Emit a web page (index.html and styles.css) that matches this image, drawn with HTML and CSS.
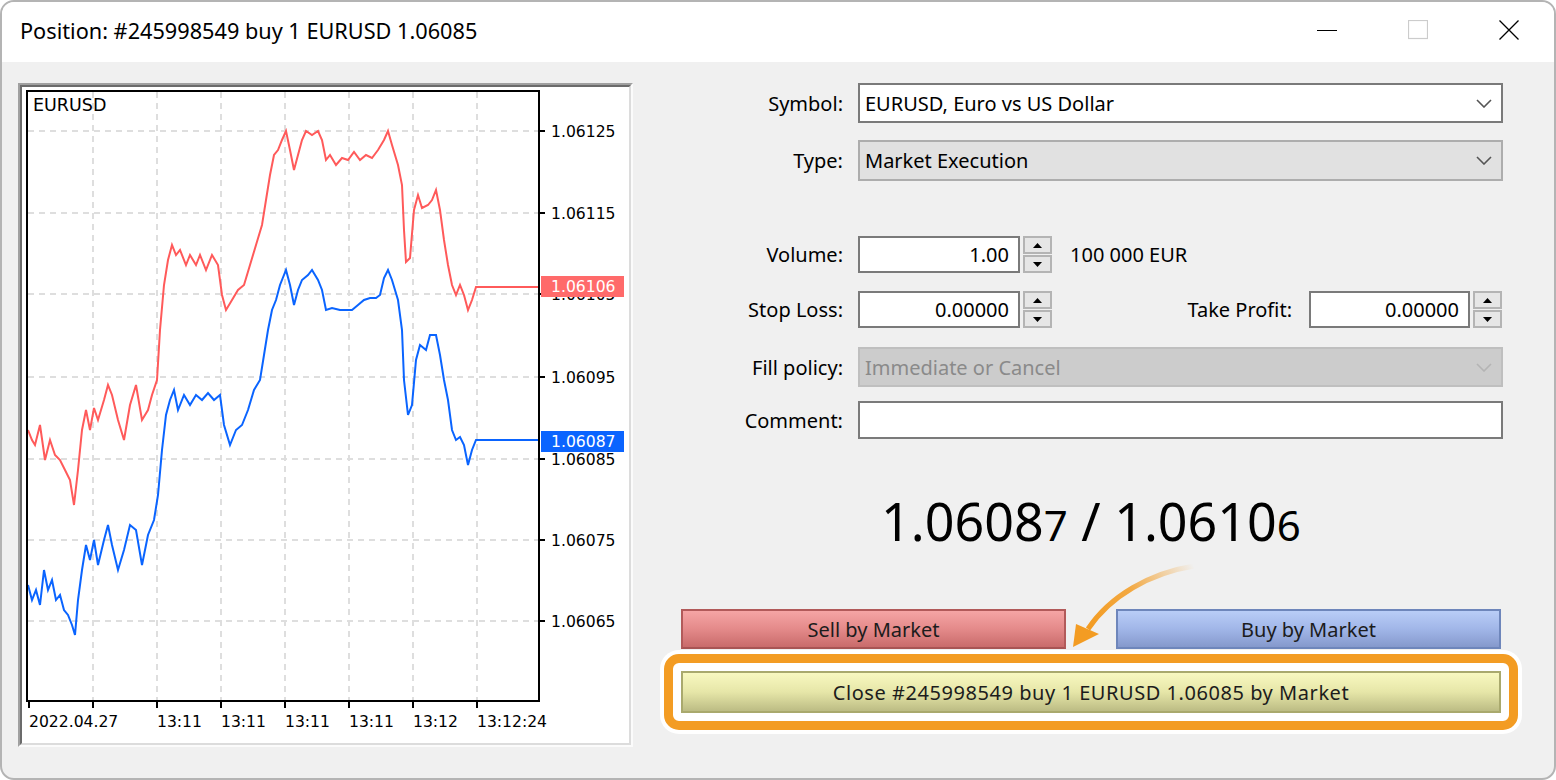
FILE: index.html
```html
<!DOCTYPE html>
<html>
<head>
<meta charset="utf-8">
<title>Position</title>
<link rel="stylesheet" href="styles.css">
</head>
<body>
<div class="window">
  <div class="titlebar">
    <div class="title">Position: #245998549 buy 1 EURUSD 1.06085</div>
    <div class="controls">
      <div class="ctl"><svg width="20" height="20" viewBox="0 0 20 20"><line x1="0" y1="10.5" x2="20" y2="10.5" stroke="#000" stroke-width="1.2"/></svg></div>
      <div class="ctl"><svg width="20" height="20" viewBox="0 0 20 20"><rect x="0.5" y="0.5" width="19" height="18" fill="none" stroke="#cccccc" stroke-width="1.2"/></svg></div>
      <div class="ctl"><svg width="20" height="20" viewBox="0 0 20 20"><path d="M0.5 0.5 L19.5 19.5 M19.5 0.5 L0.5 19.5" stroke="#000" stroke-width="1.3"/></svg></div>
    </div>
  </div>

  <div class="content">
    <div class="chart-frame">
      <div class="chart-inner">
        <svg class="chart" width="607" height="656" viewBox="0 0 607 656">
          <defs>
            <clipPath id="under-tag" clipPathUnits="userSpaceOnUse"><rect x="541" y="297" width="90" height="20"/></clipPath>
          </defs>
          <g transform="translate(-22 -87)">
            <g class="grid" stroke="#dedede" stroke-width="2" stroke-dasharray="6 5" fill="none">
              <line x1="28" y1="131" x2="538" y2="131"/>
              <line x1="28" y1="213" x2="538" y2="213"/>
              <line x1="28" y1="294" x2="538" y2="294"/>
              <line x1="28" y1="377" x2="538" y2="377"/>
              <line x1="28" y1="459" x2="538" y2="459"/>
              <line x1="28" y1="540" x2="538" y2="540"/>
              <line x1="28" y1="621" x2="538" y2="621"/>
              <line x1="93" y1="92" x2="93" y2="700"/>
              <line x1="157" y1="92" x2="157" y2="700"/>
              <line x1="221" y1="92" x2="221" y2="700"/>
              <line x1="285" y1="92" x2="285" y2="700"/>
              <line x1="349" y1="92" x2="349" y2="700"/>
              <line x1="413" y1="92" x2="413" y2="700"/>
              <line x1="477" y1="92" x2="477" y2="700"/>
            </g>
            <polyline fill="none" stroke="#ff5a5a" stroke-width="2" stroke-linejoin="miter" points="28,430 32,440 35,445 40,425 45,460 50,440 55,455 60,460 65,470 70,480 74,505 78,470 82,430 86,410 90,430 94,408 98,420 104,400 108,385 112,395 118,420 124,440 130,405 136,385 142,420 148,410 152,395 157,380 160,330 164,285 168,260 172,245 176,255 180,250 186,265 190,255 196,265 200,255 206,270 212,255 218,265 222,295 226,310 232,300 238,290 244,285 250,265 256,245 262,225 266,200 270,175 274,155 278,150 282,140 286,131 290,150 294,170 298,155 302,140 306,131 312,135 318,131 322,140 326,160 330,155 336,165 342,158 348,160 354,152 360,160 366,155 372,158 378,150 384,140 388,131 392,145 398,165 402,185 404,230 406,262 410,258 414,210 418,195 422,208 428,205 432,200 436,190 440,210 444,240 448,265 452,285 456,295 460,285 464,295 468,310 472,300 476,287 540,287"/>
            <polyline fill="none" stroke="#0a64ff" stroke-width="2" stroke-linejoin="miter" points="28,585 32,600 36,590 40,605 44,570 48,590 52,580 56,600 60,595 64,610 68,615 72,625 75,635 78,600 82,570 86,545 90,560 94,540 98,565 104,540 108,525 112,545 118,570 124,550 130,525 136,530 142,565 148,535 154,520 158,495 162,450 166,415 170,400 174,390 178,410 184,395 190,405 196,395 202,400 208,393 214,400 220,395 224,425 230,445 236,430 242,425 248,410 254,390 260,380 264,355 268,330 272,310 276,300 280,285 286,270 290,285 294,305 298,290 302,280 308,275 312,270 318,280 322,290 326,310 332,308 340,310 346,310 352,310 358,305 364,300 370,298 376,298 380,295 384,278 388,270 392,280 398,300 402,330 404,380 408,415 412,405 416,360 420,345 426,350 430,335 436,335 440,355 444,380 448,400 452,430 456,440 460,437 464,445 468,465 472,450 476,440 540,440"/>
            <rect x="27" y="91" width="512" height="610" fill="none" stroke="#000" stroke-width="2"/>
            <g stroke="#000" stroke-width="2">
              <line x1="539" y1="131" x2="545" y2="131"/>
              <line x1="539" y1="213" x2="545" y2="213"/>
              <line x1="539" y1="294" x2="545" y2="294"/>
              <line x1="539" y1="377" x2="545" y2="377"/>
              <line x1="539" y1="459" x2="545" y2="459"/>
              <line x1="539" y1="540" x2="545" y2="540"/>
              <line x1="539" y1="621" x2="545" y2="621"/>
              <line x1="29" y1="701" x2="29" y2="708"/>
              <line x1="93" y1="701" x2="93" y2="708"/>
              <line x1="157" y1="701" x2="157" y2="708"/>
              <line x1="221" y1="701" x2="221" y2="708"/>
              <line x1="285" y1="701" x2="285" y2="708"/>
              <line x1="349" y1="701" x2="349" y2="708"/>
              <line x1="413" y1="701" x2="413" y2="708"/>
              <line x1="477" y1="701" x2="477" y2="708"/>
            </g>
            <g class="axis-text">
              <text x="551" y="137">1.06125</text>
              <text x="551" y="219">1.06115</text>
              <text x="551" y="383">1.06095</text>
              <text x="551" y="465">1.06085</text>
              <text x="551" y="546">1.06075</text>
              <text x="551" y="627">1.06065</text>
              <text x="29" y="727">2022.04.27</text>
              <text x="157" y="727">13:11</text>
              <text x="221" y="727">13:11</text>
              <text x="285" y="727">13:11</text>
              <text x="349" y="727">13:11</text>
              <text x="413" y="727">13:12</text>
              <text x="477" y="727">13:12:24</text>
            </g>
            <text class="axis-part" x="551" y="300" clip-path="url(#under-tag)">1.06105</text>
            <rect x="541" y="276" width="83" height="21" fill="#ff6a6a"/>
            <text class="tag-text" x="551" y="292">1.06106</text>
            <rect x="541" y="431" width="83" height="21" fill="#0a64ff"/>
            <text class="tag-text" x="551" y="447">1.06087</text>
            <text class="sym-text" x="33" y="111">EURUSD</text>
          </g>
        </svg>
      </div>
    </div>

    <div class="form">
      <div class="row r-symbol">
        <div class="label">Symbol:</div>
        <div class="select white">
          <span>EURUSD, Euro vs US Dollar</span>
          <svg class="chev" width="16" height="9" viewBox="0 0 16 9"><path d="M1 1 L8 8 L15 1" fill="none" stroke="#555" stroke-width="1.6"/></svg>
        </div>
      </div>
      <div class="row r-type">
        <div class="label">Type:</div>
        <div class="select gray">
          <span>Market Execution</span>
          <svg class="chev" width="16" height="9" viewBox="0 0 16 9"><path d="M1 1 L8 8 L15 1" fill="none" stroke="#555" stroke-width="1.6"/></svg>
        </div>
      </div>
      <div class="row r-volume">
        <div class="label">Volume:</div>
        <div class="line">
          <div class="input num">1.00</div>
          <div class="spin">
            <div class="sp"><svg width="9" height="5" viewBox="0 0 9 5"><path d="M0 5 L4.5 0 L9 5Z" fill="#000"/></svg></div>
            <div class="sp"><svg width="9" height="5" viewBox="0 0 9 5"><path d="M0 0 L4.5 5 L9 0Z" fill="#000"/></svg></div>
          </div>
          <div class="hint">100 000 EUR</div>
        </div>
      </div>
      <div class="row r-sl">
        <div class="label">Stop Loss:</div>
        <div class="line">
          <div class="input num">0.00000</div>
          <div class="spin">
            <div class="sp"><svg width="9" height="5" viewBox="0 0 9 5"><path d="M0 5 L4.5 0 L9 5Z" fill="#000"/></svg></div>
            <div class="sp"><svg width="9" height="5" viewBox="0 0 9 5"><path d="M0 0 L4.5 5 L9 0Z" fill="#000"/></svg></div>
          </div>
          <div class="label tp-label">Take Profit:</div>
          <div class="input num tp">0.00000</div>
          <div class="spin">
            <div class="sp"><svg width="9" height="5" viewBox="0 0 9 5"><path d="M0 5 L4.5 0 L9 5Z" fill="#000"/></svg></div>
            <div class="sp"><svg width="9" height="5" viewBox="0 0 9 5"><path d="M0 0 L4.5 5 L9 0Z" fill="#000"/></svg></div>
          </div>
        </div>
      </div>
      <div class="row r-fill">
        <div class="label">Fill policy:</div>
        <div class="select disabled">
          <span>Immediate or Cancel</span>
          <svg class="chev" width="16" height="9" viewBox="0 0 16 9"><path d="M1 1 L8 8 L15 1" fill="none" stroke="#b4b4b4" stroke-width="1.6"/></svg>
        </div>
      </div>
      <div class="row r-comment">
        <div class="label">Comment:</div>
        <div class="input"></div>
      </div>

      <div class="prices">1.0608<span class="small">7</span> / 1.0610<span class="small">6</span></div>

      <div class="btn-row">
        <div class="btn sell">Sell by Market</div>
        <div class="btn buy">Buy by Market</div>
      </div>
      <div class="highlight">
        <div class="btn close">Close #245998549 buy 1 EURUSD 1.06085 by Market</div>
      </div>
    </div>
  </div>
</div>

<svg class="arrow" width="1556" height="780" viewBox="0 0 1556 780">
  <defs>
    <linearGradient id="ag" gradientUnits="userSpaceOnUse" x1="1194" y1="566" x2="1090" y2="628">
      <stop offset="0" stop-color="#f39c23" stop-opacity="0"/>
      <stop offset="0.55" stop-color="#f39c23" stop-opacity="0.85"/>
      <stop offset="1" stop-color="#f39c23" stop-opacity="1"/>
    </linearGradient>
  </defs>
  <path d="M1194 566 C1150 573 1110 596 1088 629" fill="none" stroke="url(#ag)" stroke-width="5"/>
  <path d="M1073 647 L1076 624 L1099 634 Z" fill="#f39c23"/>
</svg>
</body>
</html>
```

FILE: styles.css
```css
html, body {
  margin: 0;
  padding: 0;
  background: #ffffff;
}
body {
  position: relative;
  width: 1556px;
  height: 780px;
  overflow: hidden;
  font-family: "Noto Sans", "Open Sans", sans-serif;
  color: #000;
}
.window {
  box-sizing: border-box;
  width: 1556px;
  height: 780px;
  border: 2px solid #b4b4b4;
  border-radius: 14px;
  background: #f0f0f0;
  overflow: hidden;
}
.titlebar {
  height: 60px;
  background: #ffffff;
  display: flex;
  justify-content: space-between;
}
.title {
  padding-left: 18px;
  padding-top: 15px;
  font-size: 21.7px;
  line-height: 28px;
  color: #000;
}
.controls {
  display: flex;
  padding-top: 18px;
}
.ctl {
  width: 91px;
  height: 20px;
  display: flex;
  justify-content: center;
}
.ctl svg { display: block; }

.content {
  display: flex;
  padding: 21px 0 0 16px;
}
.chart-frame {
  box-sizing: border-box;
  width: 615px;
  height: 664px;
  border: 2px solid;
  border-color: #a0a0a0 #fbfbfb #fbfbfb #a0a0a0;
}
.chart-inner {
  box-sizing: border-box;
  height: 100%;
  border: 2px solid;
  border-color: #6b6b6b #dcdcdc #dcdcdc #6b6b6b;
  background: #ffffff;
}
.chart { display: block; }
.axis-text text,
.axis-part {
  font-family: "DejaVu Sans", sans-serif;
  font-size: 15.6px;
  fill: #000;
}
.tag-text {
  font-family: "DejaVu Sans", sans-serif;
  font-size: 15.6px;
  fill: #ffffff;
}
.sym-text {
  font-family: "DejaVu Sans", sans-serif;
  font-size: 17.5px;
  fill: #000;
}

.form {
  margin-left: 25px;
  width: 845px;
  font-size: 20px;
}
.row {
  display: grid;
  grid-template-columns: 185px 1fr;
  column-gap: 15px;
  align-items: center;
}
.label {
  text-align: right;
  white-space: nowrap;
}
.r-symbol .select { height: 40px; }
.r-type { margin-top: 17px; }
.r-type .select { height: 41px; }
.r-volume { margin-top: 55px; }
.r-sl { margin-top: 18px; }
.r-fill { margin-top: 19px; }
.r-fill .select { height: 40px; }
.r-comment { margin-top: 14px; }
.r-comment .input { height: 38px; }

.select {
  box-sizing: border-box;
  display: flex;
  align-items: center;
  justify-content: space-between;
  padding: 0 9px 0 5px;
  border: 2px solid #7a7a7a;
}
.select.white { background: #ffffff; }
.select.gray { background: #e1e1e1; border-color: #adadad; }
.select.disabled { background: #cccccc; border-color: #bfbfbf; color: #8a8a8a; }
.chev { display: block; }

.line {
  display: flex;
  align-items: center;
  height: 37px;
}
.input {
  box-sizing: border-box;
  height: 37px;
  border: 2px solid #7a7a7a;
  background: #ffffff;
}
.input.num {
  width: 162px;
  text-align: right;
  padding-right: 9px;
  line-height: 33px;
}
.input.tp { width: 161px; }
.spin {
  width: 29px;
  height: 37px;
  margin-left: 3px;
  display: flex;
  flex-direction: column;
  gap: 1px;
}
.sp {
  box-sizing: border-box;
  flex: 1;
  border: 2px solid #b4b4b4;
  background: #e6e6e6;
  display: flex;
  align-items: center;
  justify-content: center;
}
.sp svg { display: block; }
.hint { margin-left: 18px; }
.tp-label {
  flex: 1;
  margin-right: 17px;
}
.r-sl .line { margin-right: 1px; }

.prices {
  margin: 52px 0 0 23px;
  width: 820px;
  height: 60px;
  text-align: center;
  font-size: 52px;
  line-height: 60px;
  white-space: pre;
}
.prices .small {
  font-size: 42px;
  line-height: 1;
}

.btn-row {
  margin: 58px 0 0 23px;
  width: 820px;
  display: flex;
  justify-content: space-between;
}
.btn {
  box-sizing: border-box;
  height: 40px;
  border: 2px solid;
  display: flex;
  align-items: center;
  justify-content: center;
  font-size: 20px;
  color: #1c1c1c;
}
.sell {
  width: 385px;
  background: linear-gradient(#f5a5a5, #e48a8a 50%, #c96b6b);
  border-color: #b25a5a #b25a5a #a85454 #b25a5a;
}
.buy {
  width: 385px;
  background: linear-gradient(#b9cdf7, #a1b6e8 50%, #8599cc);
  border-color: #6e86bb;
}
.highlight {
  margin: 5px 0 0 6px;
  width: 854px;
  box-sizing: border-box;
  border: 9px solid #f39c23;
  border-radius: 15px;
  padding: 8px;
  background: #ffffff;
  box-shadow: 0 0 0 4px #ffffff;
}
.close {
  height: 42px;
  letter-spacing: 0.55px;
  background: linear-gradient(#f8f8c0, #e6e6a8 50%, #bcbc84);
  border-color: #a9a96d;
}

.arrow {
  position: absolute;
  left: 0;
  top: 0;
  pointer-events: none;
}
```
